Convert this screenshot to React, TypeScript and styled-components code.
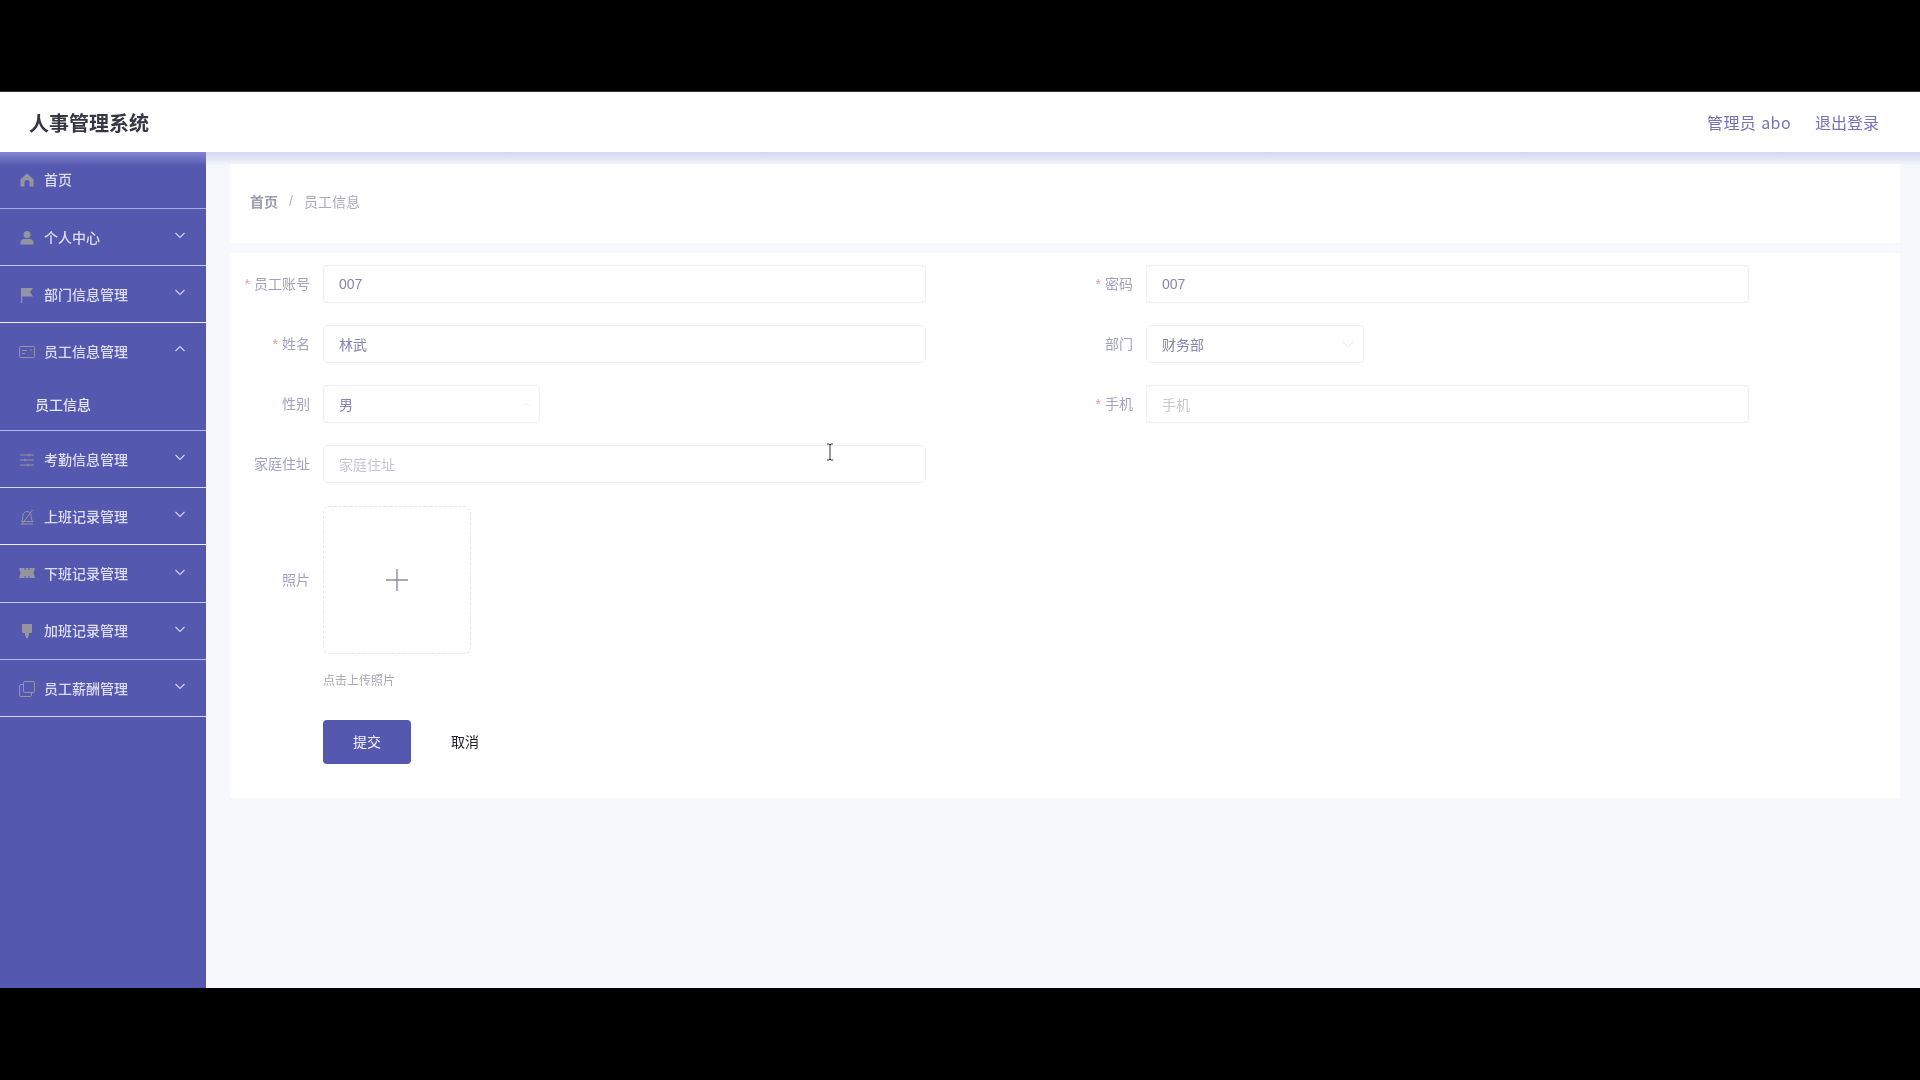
import React from "react";
import styled, { createGlobalStyle } from "styled-components";

const GlobalStyle = createGlobalStyle`
  html, body { margin: 0; padding: 0; height: 100%; background: #000; }
  * { box-sizing: border-box; }
  body { font-family: "Liberation Sans", "Noto Sans CJK SC", sans-serif; }
`;

const Page = styled.div`
  position: relative;
  width: 1920px;
  height: 1080px;
  display: flex;
  flex-direction: column;
  overflow: hidden;
  background: #000;
`;

const BlackBand = styled.div<{ $height: number }>`
  height: ${(p) => p.$height}px;
  flex: none;
  background: #000;
`;

const Screen = styled.div`
  flex: 1;
  display: flex;
  flex-direction: column;
  min-height: 0;
  border-top: 1px solid #333;
  filter: blur(0.5px);
`;

const Header = styled.header`
  height: 60px;
  flex: none;
  display: flex;
  align-items: center;
  justify-content: space-between;
  padding: 0 41px 0 29px;
  background: #fff;
`;

const Title = styled.div`
  font-size: 20px;
  font-weight: 700;
  color: #363644;
`;

const HeaderLinks = styled.div`
  display: flex;
  gap: 24px;
  font-family: "Noto Sans CJK SC", sans-serif;
  font-size: 16px;
  word-spacing: 1px;
  color: #7474b4;
`;

const UserName = styled.span`
  letter-spacing: 0.4px;
`;

const Body = styled.div`
  flex: 1;
  display: flex;
  min-height: 0;
`;

const Sidebar = styled.aside`
  position: relative;
  width: 206px;
  flex: none;
  background: #5558af;
  &::before {
    content: "";
    position: absolute;
    left: 0;
    right: 0;
    top: 0;
    height: 14px;
    background: linear-gradient(#8486d2, #5558af);
  }
`;

const MenuItem = styled.div<{ $line: string }>`
  border-bottom: 1px solid ${(p) => p.$line};
`;

const MenuTitle = styled.div<{ $height: number; $lift?: number }>`
  position: relative;
  height: ${(p) => p.$height}px;
  display: flex;
  align-items: center;
  padding: 0 0 ${(p) => p.$lift ?? 0}px 19px;
  font-size: 14px;
  font-weight: 500;
  color: #dcdcf2;
`;

const MenuIcon = styled.svg`
  width: 16px;
  height: 16px;
  margin: 1px 9px 0 0;
  flex: none;
  color: #94959f;
`;

const Chevron = styled.svg`
  position: absolute;
  right: 20px;
  top: 50%;
  width: 12px;
  height: 12px;
  margin-top: -8px;
  color: #d4d4ec;
`;

const SubItem = styled.div`
  height: 51px;
  display: flex;
  align-items: center;
  padding-left: 35px;
  padding-bottom: 2px;
  font-size: 14px;
  font-weight: 500;
  color: #e6e6f6;
`;

const Main = styled.main`
  position: relative;
  flex: 1;
  min-width: 0;
  padding: 12px 20px 0 24px;
  background: #f6f8fb;
  &::before {
    content: "";
    position: absolute;
    left: 0;
    right: 0;
    top: 0;
    height: 14px;
    background: linear-gradient(#d3d5f5, rgba(246, 248, 251, 0));
  }
`;

const BreadcrumbCard = styled.div`
  position: relative;
  height: 79px;
  display: flex;
  align-items: center;
  gap: 11px;
  padding: 0 0 6px 20px;
  background: #fff;
  font-size: 14px;
  color: #a9a9bb;
`;

const CrumbHome = styled.span`
  font-weight: 700;
  color: #9b9bab;
`;

const CrumbSep = styled.span`
  color: #b8b8c8;
`;

const FormCard = styled.form`
  height: 545px;
  margin-top: 10px;
  padding-top: 12px;
  background: #fff;
`;

const FormGrid = styled.div`
  display: grid;
  grid-template-columns: 823px 1fr;
  row-gap: 22px;
`;

const Field = styled.div`
  display: flex;
  align-items: center;
`;

const Label = styled.label`
  width: 80px;
  margin-right: 13px;
  padding-bottom: 2px;
  flex: none;
  text-align: right;
  font-size: 14px;
  color: #a2a2c0;
`;

const Required = styled.span`
  margin-right: 4px;
  color: #ee9a9a;
`;

const Control = styled.div<{ $width: number }>`
  width: ${(p) => p.$width}px;
  height: 38px;
  display: flex;
  align-items: center;
  justify-content: space-between;
  padding: 0 9px 0 15px;
  border: 1px solid #eeeef8;
  border-radius: 4px;
  background: #fff;
  font-size: 14px;
`;

const Value = styled.span`
  color: #8585ad;
`;

const Placeholder = styled.span`
  color: #c6c6d2;
`;

const SelectArrow = styled.svg<{ $faded?: boolean }>`
  width: ${(p) => (p.$faded ? 8 : 12)}px;
  height: 12px;
  color: ${(p) => (p.$faded ? "#eeeef2" : "#e8e8ee")};
`;

const UploadRow = styled.div`
  display: flex;
  align-items: center;
  margin-top: 23px;
`;

const UploadBox = styled.div`
  width: 148px;
  height: 148px;
  display: flex;
  align-items: center;
  justify-content: center;
  border: 1px dashed #e4e4f0;
  border-radius: 6px;
  color: #8c8c96;
`;

const PlusIcon = styled.svg`
  width: 24px;
  height: 24px;
`;

const Hint = styled.div`
  margin: 19px 0 0 93px;
  font-size: 12px;
  line-height: 17px;
  color: #a9a9b8;
`;

const Actions = styled.div`
  display: flex;
  align-items: center;
  margin: 30px 0 0 93px;
`;

const SubmitButton = styled.button`
  width: 88px;
  height: 44px;
  padding: 0 0 2px;
  border: 0;
  border-radius: 4px;
  background: #5558af;
  color: #f4f4fc;
  font: inherit;
  font-size: 14px;
`;

const CancelButton = styled.button`
  width: 88px;
  height: 44px;
  margin-left: 10px;
  padding: 0 0 2px;
  border: 0;
  background: transparent;
  color: #1f1f24;
  font: inherit;
  font-size: 14px;
`;

const TextCursor = styled.svg`
  position: absolute;
  left: 825px;
  top: 443px;
  width: 10px;
  height: 18px;
  color: #333;
`;

type IconKind = "home" | "user" | "flag" | "card" | "sliders" | "bell" | "ticket" | "brush" | "copy";

const iconShapes: Record<IconKind, React.ReactNode> = {
  home: <path fill="currentColor" d="M8 1.5 1.5 7.2V14.5H5.5V10.5A2.5 2.5 0 0 1 10.5 10.5V14.5H14.5V7.2Z" />,
  user: (
    <>
      <circle cx="8" cy="4.5" r="3.5" fill="currentColor" />
      <path fill="currentColor" d="M1.5 14.5V12.5C1.5 10.3 3.5 9 5.5 9H10.5C12.5 9 14.5 10.3 14.5 12.5V14.5Z" />
    </>
  ),
  flag: <path fill="currentColor" d="M2 1H14L11 5L14 9.5H3.2V16H2Z" />,
  card: (
    <g fill="none" stroke="currentColor" strokeWidth="1">
      <rect x="0.5" y="2.5" width="15" height="11" rx="1.2" />
      <path d="M3 6.5H8M3 9.5H6M11 6H13" />
    </g>
  ),
  sliders: (
    <g fill="none" stroke="currentColor" strokeWidth="1">
      <path d="M1 3H15M1 8H15M1 13H15" />
      <path d="M10 1.5V4.5M6 6.5V9.5M9 11.5V14.5" />
    </g>
  ),
  bell: (
    <g fill="none" stroke="currentColor" strokeWidth="1">
      <path d="M2.5 12.5C4 11 3.5 8 4 6 4.5 3.5 6.5 2.5 8 2.5S11.5 3.5 12 6C12.5 8 12 11 14 12.5Z" />
      <path d="M2 15H14M13.5 1 3 15" />
    </g>
  ),
  ticket: (
    <path
      fill="currentColor"
      d="M0 3H5.5V5H6.5V3H9.5V5H10.5V3H16L14.5 8 16 13H10.5V11H9.5V13H6.5V11H5.5V13H0L1.5 8Z"
    />
  ),
  brush: (
    <path fill="currentColor" d="M3 1H13V8.5C13 9.5 12.4 10 11.5 10H10V12L8.6 15.5H7.4L6 12V10H4.5C3.6 10 3 9.5 3 8.5Z" />
  ),
  copy: (
    <g fill="none" stroke="currentColor" strokeWidth="1">
      <rect x="4.5" y="0.5" width="11" height="11" rx="1.5" />
      <path d="M4.5 3.5H2A1.5 1.5 0 0 0 0.5 5V14A1.5 1.5 0 0 0 2 15.5H11A1.5 1.5 0 0 0 12.5 14V11.5" />
    </g>
  ),
};

const menu: { icon: IconKind; label: string; arrow?: boolean; open?: boolean; line: string; height: number; lift?: number }[] = [
  { icon: "home", label: "首页", line: "#a8a9e6", height: 56, lift: 2 },
  { icon: "user", label: "个人中心", arrow: true, line: "#c6c7ee", height: 56 },
  { icon: "flag", label: "部门信息管理", arrow: true, line: "#f0f0fb", height: 56 },
  { icon: "card", label: "员工信息管理", arrow: true, open: true, line: "#b4b5e8", height: 56 },
  { icon: "sliders", label: "考勤信息管理", arrow: true, line: "#d6d7f4", height: 56 },
  { icon: "bell", label: "上班记录管理", arrow: true, line: "#f0f0fb", height: 56 },
  { icon: "ticket", label: "下班记录管理", arrow: true, line: "#c6c7ee", height: 57, lift: 2 },
  { icon: "brush", label: "加班记录管理", arrow: true, line: "#b4b5e8", height: 56, lift: 2 },
  { icon: "copy", label: "员工薪酬管理", arrow: true, line: "#d6d7f4", height: 56 },
];

function FormField(props: {
  label: string;
  required?: boolean;
  width: number;
  value?: string;
  placeholder?: string;
  select?: boolean;
  faded?: boolean;
}) {
  return (
    <Field>
      <Label>
        {props.required && <Required>*</Required>}
        {props.label}
      </Label>
      <Control $width={props.width}>
        {props.value ? <Value>{props.value}</Value> : <Placeholder>{props.placeholder}</Placeholder>}
        {props.select && (
          <SelectArrow viewBox={props.faded ? "0 0 8 12" : "0 0 12 12"} $faded={props.faded}>
            <path
              d={props.faded ? "M1 8 4 5 7 8" : "M1 4 6 9 11 4"}
              fill="none"
              stroke="currentColor"
              strokeWidth="1"
            />
          </SelectArrow>
        )}
      </Control>
    </Field>
  );
}

export default function App() {
  return (
    <Page>
      <GlobalStyle />
      <BlackBand $height={91} />
      <Screen>
        <Header>
          <Title>人事管理系统</Title>
          <HeaderLinks>
            <UserName>管理员 abo</UserName>
            <span>退出登录</span>
          </HeaderLinks>
        </Header>
        <Body>
          <Sidebar>
            {menu.map((item) => (
              <MenuItem key={item.label} $line={item.line}>
                <MenuTitle $height={item.height} $lift={item.lift}>
                  <MenuIcon viewBox="0 0 16 16">{iconShapes[item.icon]}</MenuIcon>
                  {item.label}
                  {item.arrow && (
                    <Chevron viewBox="0 0 12 12">
                      <path
                        d={item.open ? "M1.5 8 6 3.5 10.5 8" : "M1.5 4 6 8.5 10.5 4"}
                        fill="none"
                        stroke="currentColor"
                        strokeWidth="1.1"
                      />
                    </Chevron>
                  )}
                </MenuTitle>
                {item.open && <SubItem>员工信息</SubItem>}
              </MenuItem>
            ))}
          </Sidebar>
          <Main>
            <BreadcrumbCard>
              <CrumbHome>首页</CrumbHome>
              <CrumbSep>/</CrumbSep>
              <span>员工信息</span>
            </BreadcrumbCard>
            <FormCard>
              <FormGrid>
                <FormField label="员工账号" required width={603} value="007" />
                <FormField label="密码" required width={603} value="007" />
                <FormField label="姓名" required width={603} value="林武" />
                <FormField label="部门" width={218} value="财务部" select />
                <FormField label="性别" width={217} value="男" select faded />
                <FormField label="手机" required width={603} placeholder="手机" />
                <FormField label="家庭住址" width={603} placeholder="家庭住址" />
              </FormGrid>
              <UploadRow>
                <Label>照片</Label>
                <UploadBox>
                  <PlusIcon viewBox="0 0 24 24">
                    <path d="M12 1V23M1 12H23" stroke="currentColor" strokeWidth="1.4" fill="none" />
                  </PlusIcon>
                </UploadBox>
              </UploadRow>
              <Hint>点击上传照片</Hint>
              <Actions>
                <SubmitButton type="button">提交</SubmitButton>
                <CancelButton type="button">取消</CancelButton>
              </Actions>
            </FormCard>
          </Main>
        </Body>
      </Screen>
      <BlackBand $height={92} />
      <TextCursor viewBox="0 0 10 18">
        <path d="M2 1H4L5 2 6 1H8M5 2V16M2 17H4L5 16 6 17H8" fill="none" stroke="currentColor" strokeWidth="1" />
      </TextCursor>
    </Page>
  );
}
